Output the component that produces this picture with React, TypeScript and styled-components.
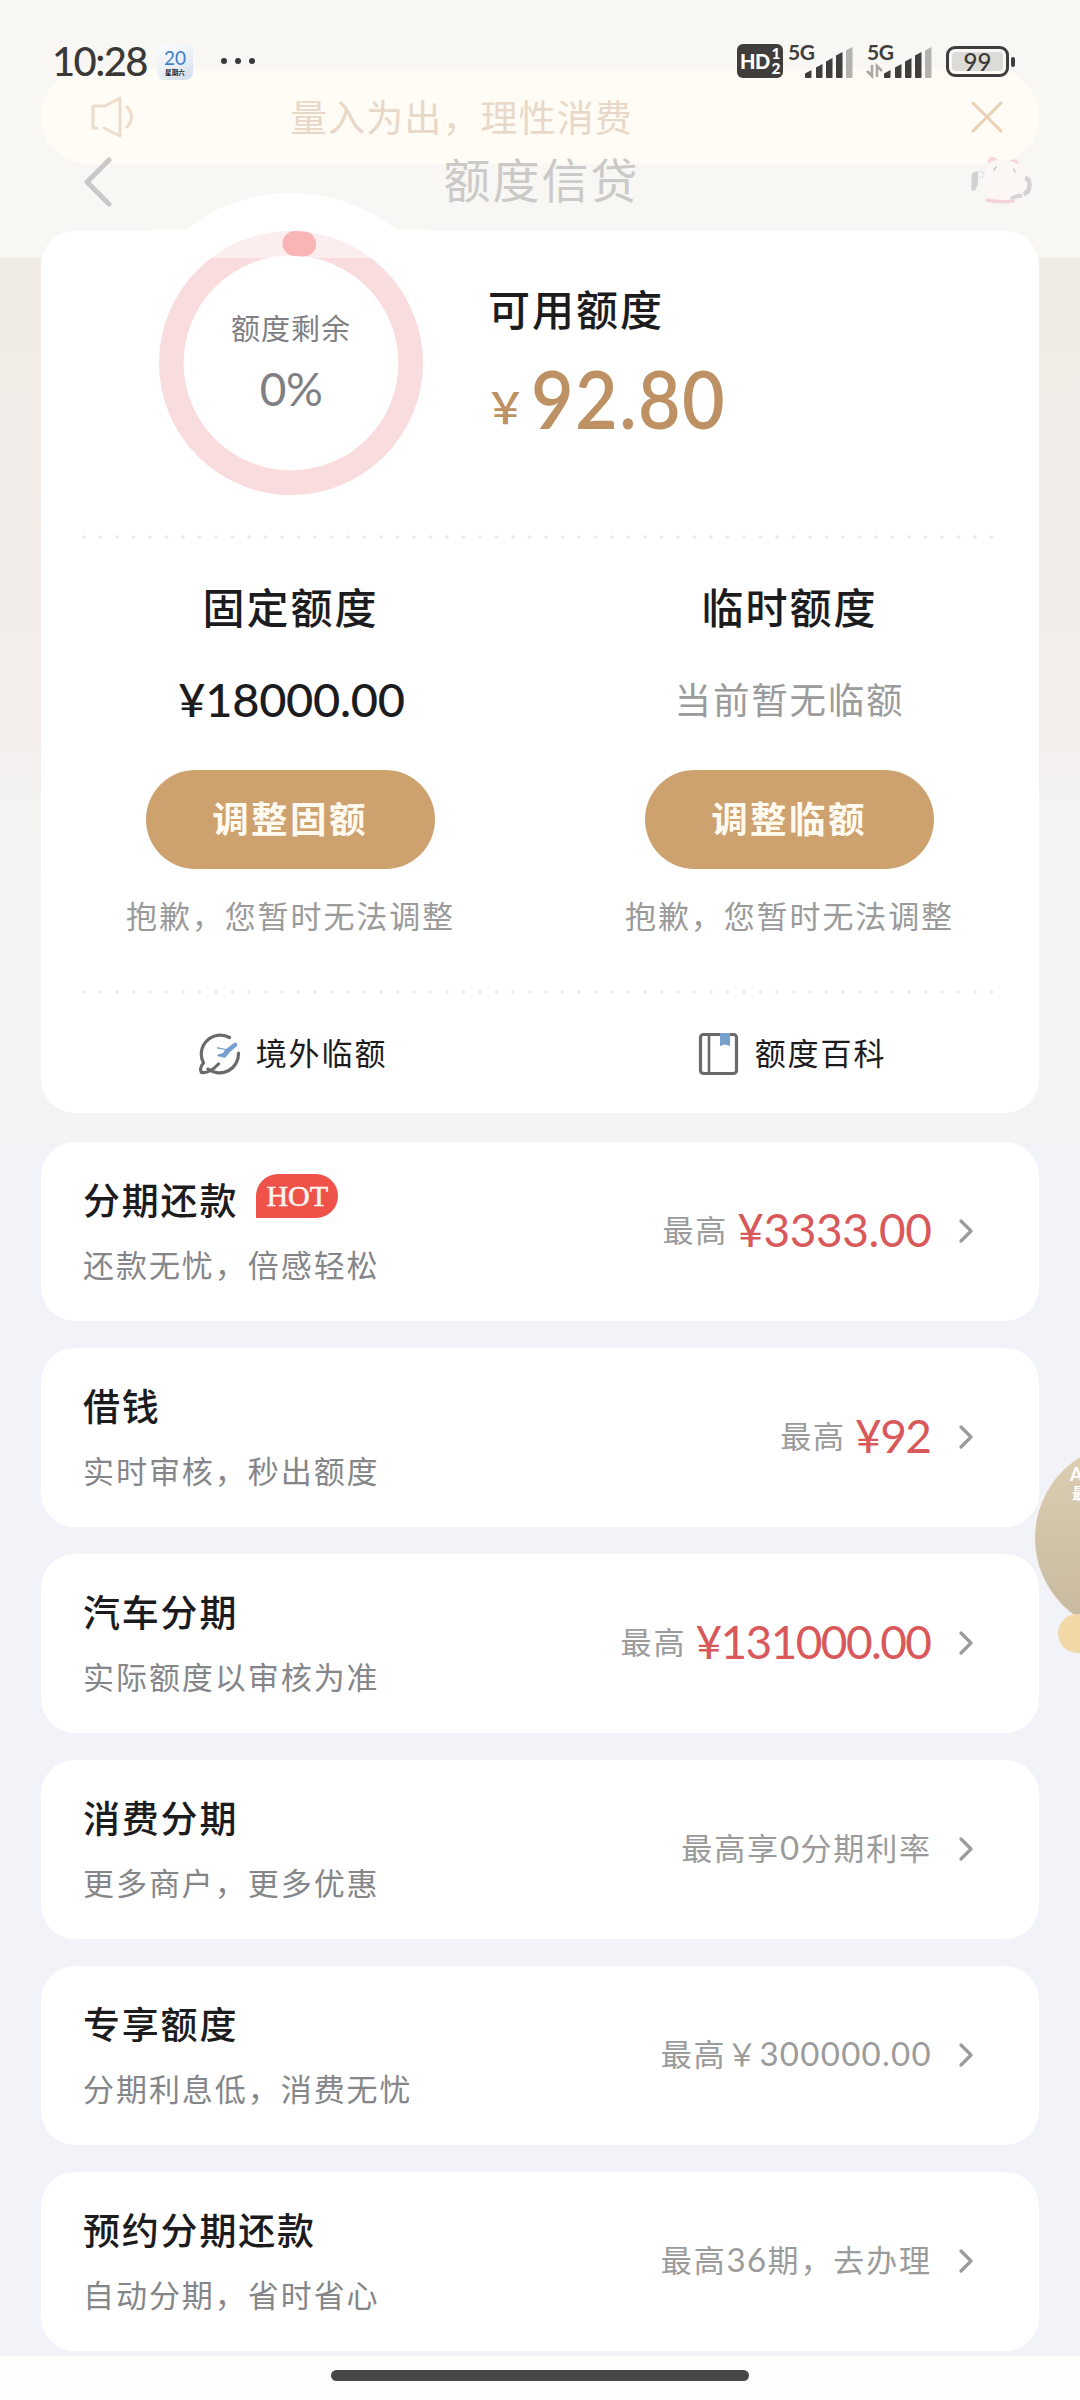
import React from "react";
import styled, { createGlobalStyle } from "styled-components";

const CJK = `"Noto Sans CJK SC", sans-serif`;
const NUM = `Lato, "Noto Sans CJK SC", sans-serif`;

const Global = createGlobalStyle`
  body { margin: 0; background: #f2f3f8; }
  * { box-sizing: border-box; }
`;

const Screen = styled.div`
  position: relative;
  width: 1080px;
  height: 2400px;
  overflow: hidden;
  display: flex;
  flex-direction: column;
  font-family: ${CJK};
  color: #1c1c1e;
  background: linear-gradient(
    #f8f7f4 0, #f8f7f4 258px, #f1ebe5 258px, #f1ece8 480px, #f4eeec 740px,
    #f3f3f2 800px, #f4f4f4 1000px, #f4f4f4 1143px, #f2f3f8 1144px, #f2f3f8 100%
  );
`;

const StatusBar = styled.div`
  position: relative;
  z-index: 1;
  height: 80px;
  padding: 42px 64px 0 52px;
  display: flex;
  justify-content: space-between;
  align-items: flex-start;
`;
const StatusSide = styled.div`
  display: flex;
  align-items: center;
  height: 38px;
`;
const Clock = styled.div`
  width: 105px;
  font: 500 40px/38px ${NUM};
  letter-spacing: -1.6px;
  color: #3a3937;
`;
const CalendarIcon = styled.div`
  width: 36px;
  height: 37px;
  border-radius: 8px;
  background: linear-gradient(150deg, #fcfdfe, #eaf0f6 55%, #cfdcea);
  display: flex;
  flex-direction: column;
  align-items: center;
  padding-top: 6px;
`;
const CalendarDay = styled.div`
  font: 400 19px/18px ${NUM};
  color: #3d80c8;
`;
const CalendarWeek = styled.div`
  font: 700 6.6px/8px ${CJK};
  margin-top: 1px;
  color: #222;
`;
const MoreDots = styled.div`
  display: flex;
  gap: 8px;
  margin-left: 28px;
`;
const Dot = styled.i`
  width: 6px;
  height: 6px;
  border-radius: 50%;
  background: #3a3937;
`;
const HdBadge = styled.div`
  width: 46px;
  height: 34px;
  border-radius: 6px;
  background: #3f3e3c;
  color: #fff;
  display: flex;
  align-items: center;
  justify-content: center;
  font: 900 20px/34px ${NUM};
  letter-spacing: -0.6px;
  margin-right: 5px;
`;
const HdNums = styled.span`
  display: flex;
  flex-direction: column;
  font: 900 15.5px/15px ${NUM};
  margin-left: 2px;
`;
const Signal = styled.svg`
  width: 66px;
  height: 38px;
  margin-right: 13px;
  overflow: visible;
  font: 700 21px ${NUM};
`;
const Battery = styled.div`
  position: relative;
  width: 63px;
  height: 31px;
  border: 3px solid #3f3e3c;
  border-radius: 9px;
  padding: 3px;
  margin-right: 7px;
  &::after {
    content: "";
    position: absolute;
    left: 62px;
    top: 8px;
    width: 4px;
    height: 10px;
    border-radius: 2px;
    background: #3f3e3c;
  }
`;
const BatteryLevel = styled.div`
  height: 19px;
  border-radius: 4px;
  background: #dcdbd8;
  text-align: center;
  font: 500 24px/19px ${NUM};
  color: #3a3937;
`;

const Notice = styled.div`
  margin: -11px 41px 0;
  height: 95px;
  flex: none;
  border-radius: 48px;
  background: #fffcf5;
  display: flex;
  align-items: center;
  padding: 0 36px 0 48px;
`;
const NoticeText = styled.div`
  flex: 1;
  padding-left: 153px;
  font-size: 37px;
  line-height: 50px;
  letter-spacing: 1.1px;
  color: #e9d8c7;
  margin-top: -2px;
`;

const NavBar = styled.div`
  flex: none;
  margin-top: -7px;
  height: 74px;
  padding: 0 48px 0 83px;
  display: flex;
  justify-content: space-between;
  align-items: flex-start;
`;
const NavTitle = styled.div`
  font-size: 47px;
  line-height: 48px;
  letter-spacing: 2px;
  color: #cbcac8;
  margin-top: -3px;
`;

const LimitCard = styled.section`
  flex: none;
  margin: 0 41px;
  height: 882px;
  border-radius: 34px;
  background: #fff;
`;
const Overview = styled.div`
  height: 304px;
  display: flex;
  padding-left: 80px;
`;
const RingBox = styled.div`
  width: 340px;
  height: 340px;
  margin-top: -38px;
  display: grid;
  justify-items: center;
  align-items: center;
  > * { grid-area: 1 / 1; }
`;
const RingText = styled.div`
  display: flex;
  flex-direction: column;
  align-items: center;
  color: #7f8084;
  padding-bottom: 4px;
`;
const RingLabel = styled.div`
  font-size: 29px;
  line-height: 36px;
  letter-spacing: 1px;
`;
const RingValue = styled.div`
  font: 400 46px/50px ${NUM};
  letter-spacing: -0.5px;
  margin-top: 19px;
`;
const Available = styled.div`
  margin-left: 27px;
  padding-top: 49px;
`;
const AmountTitle = styled.div`
  font-size: 42px;
  line-height: 56px;
  letter-spacing: 2px;
  font-weight: 500;
  white-space: nowrap;
`;
const BigAmount = styled.div`
  display: flex;
  align-items: flex-start;
  color: #bd9163;
  margin: 12px 0 0 -4px;
`;
const BigYen = styled.span`
  font-size: 43px;
  line-height: 60px;
  font-weight: 500;
  width: 47px;
  padding-top: 27px;
`;
const BigNumber = styled.span`
  font-family: ${NUM};
  font-size: 80px;
  line-height: 100px;
  font-weight: 600;
  letter-spacing: 1.5px;
  transform: scaleX(0.92);
  transform-origin: left;
`;

const DottedLine = styled.div`
  height: 4px;
  margin: 0 41px;
  background: radial-gradient(circle at 2px 2px, #ececec 1.5px, transparent 2px) 0 0 / 16.5px 4px repeat-x;
`;

const Columns = styled.div<{ $h: number }>`
  display: grid;
  grid-template-columns: 1fr 1fr;
  height: ${(p) => p.$h}px;
`;
const Column = styled.div`
  display: flex;
  flex-direction: column;
  align-items: center;
  padding-top: 39px;
`;
const FixedAmount = styled.div`
  font: 500 47px/50px ${NUM};
  letter-spacing: -0.3px;
  margin-top: 40px;
  padding-left: 2px;
`;
const NoTemp = styled.div`
  font-size: 36.5px;
  line-height: 50px;
  letter-spacing: 1.8px;
  color: #9b9b9b;
  margin-top: 40px;
`;
const PillButton = styled.button`
  width: 289px;
  height: 99px;
  border: 0;
  border-radius: 50px;
  margin-top: 46px;
  padding: 0 1px 4px 0;
  background: #cda26f;
  color: #fffaf0;
  font: 700 36.5px/50px ${CJK};
  letter-spacing: 2.4px;
`;
const Apology = styled.div`
  font-size: 31px;
  line-height: 40px;
  letter-spacing: 1.9px;
  color: #9a9a9a;
  margin-top: 26px;
`;
const LinkItem = styled.div`
  display: flex;
  align-items: center;
  justify-content: center;
  gap: 15px;
  padding-left: 5px;
  font-size: 31px;
  line-height: 40px;
  letter-spacing: 1.9px;
`;
const LinkLabel = styled.span`
  margin-top: -3px;
`;

const List = styled.div`
  flex: none;
  display: flex;
  flex-direction: column;
  gap: 27px;
  padding: 29px 41px 5px;
`;
const Row = styled.div`
  height: 179px;
  border-radius: 34px;
  background: #fff;
  display: flex;
  align-items: center;
  justify-content: space-between;
  padding: 0 65px 0 42px;
`;
const RowHead = styled.div`
  display: flex;
  align-items: flex-end;
`;
const RowTitle = styled.div`
  font-size: 37px;
  line-height: 52px;
  letter-spacing: 1.8px;
  font-weight: 500;
`;
const RowSub = styled.div`
  font-size: 31px;
  line-height: 44px;
  letter-spacing: 1.95px;
  color: #85868a;
  margin-top: 17px;
`;
const RowText = styled.div`
  margin-top: -5px;
`;
const Hot = styled.span`
  width: 82px;
  height: 44px;
  margin: 0 0 7px 18px;
  border-radius: 22px 22px 22px 0;
  background: #ee5249;
  color: #fff4f0;
  text-align: center;
  font: 400 30px/44px "Liberation Serif", serif;
  -webkit-text-stroke: 0.6px #fff4f0;
`;
const RowRight = styled.div`
  display: flex;
  align-items: center;
  margin-top: -1px;
`;
const RowHint = styled.span`
  font-size: 31px;
  line-height: 44px;
  letter-spacing: 1.9px;
  color: #9b9b9b;
  margin-top: -4px;
`;
const HintDigits = styled.span`
  font-family: ${NUM};
  font-size: 33px;
  letter-spacing: 1.3px;
`;
const RowMoney = styled.span<{ $track: number }>`
  font: 400 46px/50px ${NUM};
  letter-spacing: ${(p) => p.$track}px;
  margin: -3px ${(p) => -p.$track}px 0 9px;
  color: #d9585a;
`;
const Chevron = styled.svg`
  margin-left: 26px;
`;

const HomeArea = styled.div`
  flex: 1;
  background: #fefefc;
  display: flex;
  justify-content: center;
  padding-top: 14px;
`;
const HomeBar = styled.div`
  width: 418px;
  height: 11px;
  border-radius: 6px;
  background: #474747;
`;

const FloatBall = styled.div`
  position: absolute;
  left: 1035px;
  top: 1443px;
  width: 190px;
  height: 190px;
  border-radius: 50%;
  background: linear-gradient(#dccfb2, #c7b89f);
  box-shadow: 0 0 0 1px #f7f3ea;
  color: #fff;
  padding: 21px 0 0 35px;
  white-space: nowrap;
`;
const BallTop = styled.div`
  font: 700 18px/20px ${NUM};
`;
const BallSub = styled.div`
  font: 700 15px/22px ${CJK};
  padding-left: 2px;
  margin-top: -2px;
`;
const FloatTag = styled.div`
  position: absolute;
  left: 1058px;
  top: 1614px;
  width: 100px;
  height: 39px;
  border-radius: 20px;
  background: #f2d8a6;
`;

function SignalIcon({ data }: { data?: boolean }) {
  const bars = [
    [17, 28, 8], [28, 22, 14], [38, 16, 20], [48, 10, 26], [58, 5, 31],
  ];
  return (
    <Signal viewBox="0 0 66 38">
      <text x="0" y="17.5" fill="#3f3e3c" textLength="27">5G</text>
      {bars.map(([x, y, h], i) => (
        <path
          key={x}
          d={`M${x} ${y + 3.5}L${x + 6.5} ${y}V${y + h - 1}q0 1-1 1H${x + 1}q-1 0-1-1Z`}
          fill={i === 4 ? "#b3b2af" : "#3f3e3c"}
        />
      ))}
      {data && (
        <g stroke="#aaa9a6" strokeWidth="2.6" fill="none">
          <path d="M5 23v11l-5-5M10 35V24l5 5" />
        </g>
      )}
    </Signal>
  );
}

function Ring() {
  return (
    <svg width="340" height="340" viewBox="0 0 340 340">
      <circle cx="170" cy="170" r="170" fill="#fff" />
      <circle cx="170" cy="170" r="119.7" fill="none" stroke="#f9dcdd" strokeWidth="24.6" />
      <rect x="30" y="36" width="280" height="29" fill="#fff" opacity="0.52" />
      <path d="M174 50.5A119.7 119.7 0 0 1 182.5 51" fill="none" stroke="#f9b5b5" strokeWidth="25" strokeLinecap="round" />
    </svg>
  );
}

function Piggy() {
  return (
    <svg width="62" height="48" viewBox="0 0 62 48">
      <path d="M17 6q1-6 5-7 4 1 6 5ZM39 4q4-3 8-1 2 3 1 6Z" fill="#f6d6da" />
      <path d="M22 4q12-4 24 2c8 5 12 14 9 22-4 9-12 16-22 16S16 38 14 29C12 19 15 9 22 4Z" fill="#fcf6f5" />
      <path d="M2 16l6-2v13l-3 7-4-1Z" fill="#d2d2d1" />
      <path d="M9 15q5-1 5 3t-5 2" fill="none" stroke="#e6e4e3" strokeWidth="1.4" />
      <path d="M55 21q5 1 4.5 8t-6 8" fill="none" stroke="#d2d2d1" strokeWidth="4.5" />
      <path d="M41 42q5-4 11-3" fill="none" stroke="#d5d4d3" strokeWidth="4" />
      <path d="M17 43q13 3 26 1" fill="none" stroke="#f5d3da" strokeWidth="3.6" strokeLinecap="round" />
      <path d="M26 10l-2 3M44 12l1 3" stroke="#d8d4d4" strokeWidth="2" strokeLinecap="round" />
    </svg>
  );
}

const rows = [
  { title: "分期还款", hot: true, sub: "还款无忧，倍感轻松", hint: "最高", money: "¥3333.00", track: -0.4 },
  { title: "借钱", sub: "实时审核，秒出额度", hint: "最高", money: "¥92", track: -1.5 },
  { title: "汽车分期", sub: "实际额度以审核为准", hint: "最高", money: "¥131000.00", track: -1.6 },
  { title: "消费分期", sub: "更多商户，更多优惠", hint: "最高享0分期利率" },
  { title: "专享额度", sub: "分期利息低，消费无忧", hint: "最高￥300000.00" },
  { title: "预约分期还款", sub: "自动分期，省时省心", hint: "最高36期，去办理" },
];

function Hint({ text }: { text: string }) {
  return (
    <RowHint>
      {text.split(/([\d.]+)/).map((part, i) =>
        i % 2 ? <HintDigits key={i}>{part}</HintDigits> : part
      )}
    </RowHint>
  );
}

export default function App() {
  return (
    <Screen>
      <Global />
      <StatusBar>
        <StatusSide>
          <Clock>10:28</Clock>
          <CalendarIcon>
            <CalendarDay>20</CalendarDay>
            <CalendarWeek>星期六</CalendarWeek>
          </CalendarIcon>
          <MoreDots><Dot /><Dot /><Dot /></MoreDots>
        </StatusSide>
        <StatusSide>
          <HdBadge>HD<HdNums><span>1</span><span>2</span></HdNums></HdBadge>
          <SignalIcon />
          <SignalIcon data />
          <Battery><BatteryLevel>99</BatteryLevel></Battery>
        </StatusSide>
      </StatusBar>

      <Notice>
        <svg width="48" height="44" viewBox="0 0 48 44" fill="none" stroke="#ecdccb" strokeWidth="3" strokeLinecap="round" strokeLinejoin="round">
          <path d="M8 33H4V11h12L31 3v38L15 33" />
          <path d="M38 12q9 10 0 20" />
        </svg>
        <NoticeText>量入为出，理性消费</NoticeText>
        <svg width="32" height="32" viewBox="0 0 32 32" stroke="#e9cfb4" strokeWidth="3" strokeLinecap="round">
          <path d="M2 2l28 28M30 2L2 30" />
        </svg>
      </Notice>

      <NavBar>
        <svg width="30" height="50" viewBox="0 0 30 50" fill="none" stroke="#c9c8c6" strokeWidth="5" strokeLinecap="round" strokeLinejoin="round">
          <path d="M26 3L4 25l22 22" />
        </svg>
        <NavTitle>额度信贷</NavTitle>
        <Piggy />
      </NavBar>

      <LimitCard>
        <Overview>
          <RingBox>
            <Ring />
            <RingText>
              <RingLabel>额度剩余</RingLabel>
              <RingValue>0%</RingValue>
            </RingText>
          </RingBox>
          <Available>
            <AmountTitle>可用额度</AmountTitle>
            <BigAmount><BigYen>￥</BigYen><BigNumber>92.80</BigNumber></BigAmount>
          </Available>
        </Overview>
        <DottedLine />
        <Columns $h={451}>
          <Column>
            <AmountTitle>固定额度</AmountTitle>
            <FixedAmount>¥18000.00</FixedAmount>
            <PillButton>调整固额</PillButton>
            <Apology>抱歉，您暂时无法调整</Apology>
          </Column>
          <Column>
            <AmountTitle>临时额度</AmountTitle>
            <NoTemp>当前暂无临额</NoTemp>
            <PillButton>调整临额</PillButton>
            <Apology>抱歉，您暂时无法调整</Apology>
          </Column>
        </Columns>
        <DottedLine />
        <Columns $h={119}>
          <LinkItem>
            <svg width="42" height="44" viewBox="0 0 42 44" fill="none" strokeLinecap="round" strokeLinejoin="round">
              <path d="M30.500 5.500A19 19 0 0 0 4.500 31Q0 36 2.500 40.500Q10 42 19.500 32M9 37A19 19 0 0 0 39.500 21" stroke="#6a6a6a" strokeWidth="3.2" />
              <path d="M18 15l9 2 8-6q4-1 3 3l-7 6-5 6-8-2 1-1.5 5-1.5 2-3-8-1.5Z" fill="#76a0ce" />
            </svg>
            <LinkLabel>境外临额</LinkLabel>
          </LinkItem>
          <LinkItem>
            <svg width="42" height="44" viewBox="0 0 42 44" fill="none">
              <rect x="2.5" y="2.5" width="36" height="39" rx="3" stroke="#6a6a6a" strokeWidth="3.2" />
              <path d="M11 3v38" stroke="#6a6a6a" strokeWidth="2.6" />
              <path d="M22 1h10v13l-5-1.5-5 1.5Z" fill="#76a0ce" />
            </svg>
            <LinkLabel>额度百科</LinkLabel>
          </LinkItem>
        </Columns>
      </LimitCard>

      <List>
        {rows.map((r) => (
          <Row key={r.title}>
            <RowText>
              <RowHead>
                <RowTitle>{r.title}</RowTitle>
                {r.hot && <Hot>HOT</Hot>}
              </RowHead>
              <RowSub>{r.sub}</RowSub>
            </RowText>
            <RowRight>
              <Hint text={r.hint} />
              {r.money && <RowMoney $track={r.track ?? 0}>{r.money}</RowMoney>}
              <Chevron width="16" height="26" viewBox="0 0 16 26" fill="none" stroke="#9b9b9b" strokeWidth="3.2" strokeLinecap="round" strokeLinejoin="round">
                <path d="M3 3l10 10L3 23" />
              </Chevron>
            </RowRight>
          </Row>
        ))}
      </List>

      <HomeArea><HomeBar /></HomeArea>

      <FloatBall>
        <BallTop>AI</BallTop>
        <BallSub>最</BallSub>
      </FloatBall>
      <FloatTag />
    </Screen>
  );
}
